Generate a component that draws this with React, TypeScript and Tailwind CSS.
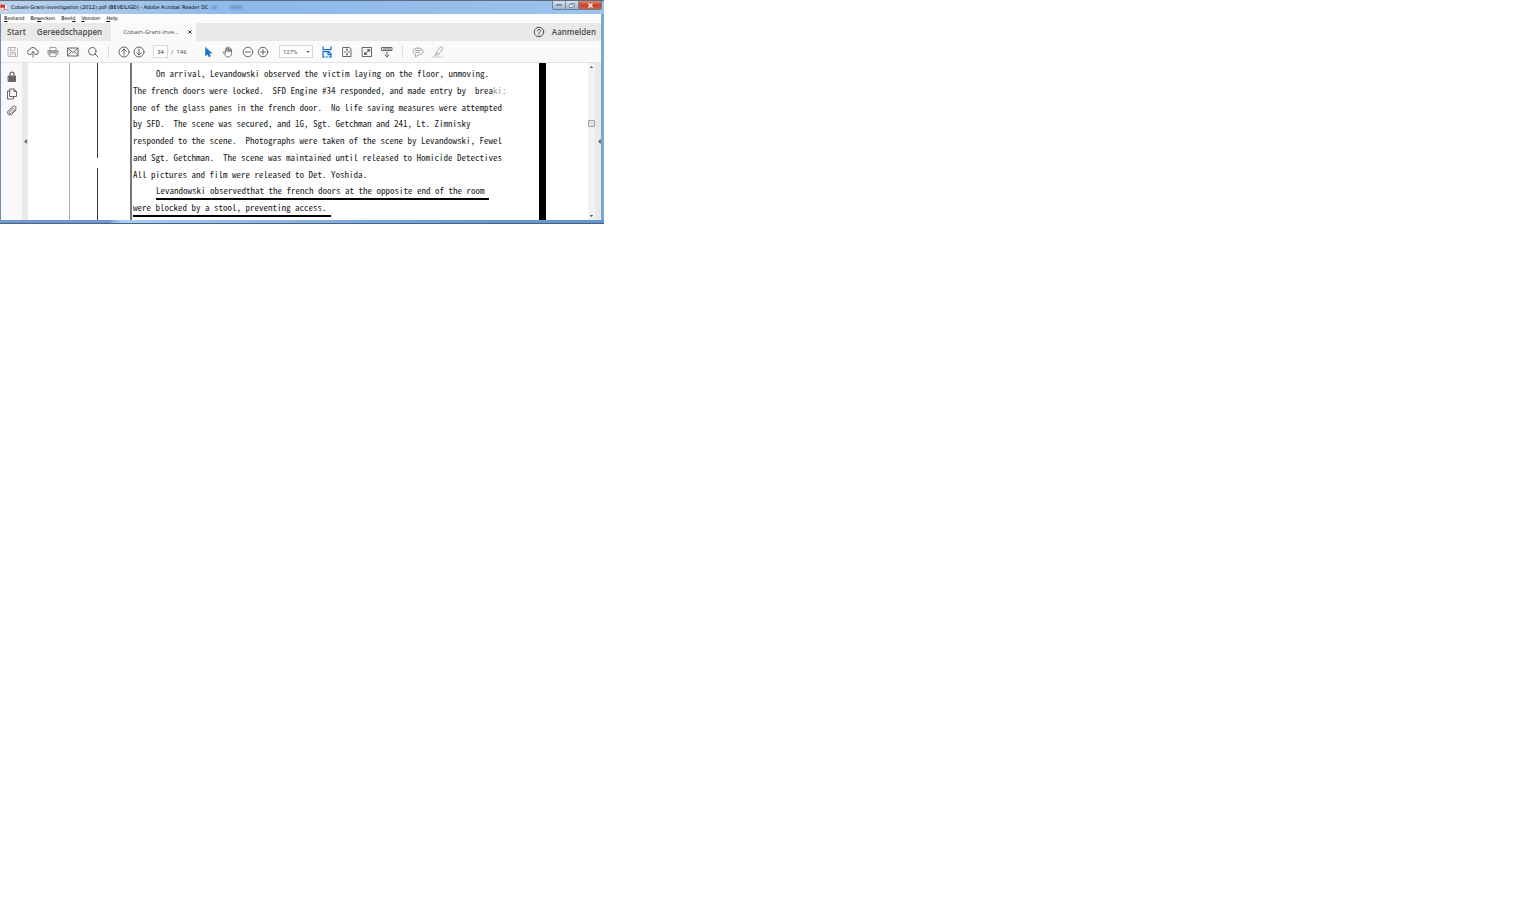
import React from "react";

type Line = { text: string; tail?: string; indent?: boolean; rule?: boolean };

const lines: Line[] = [
  { text: "On arrival, Levandowski observed the victim laying on the floor, unmoving.", indent: true },
  { text: "The french doors were locked.  SFD Engine #34 responded, and made entry by  brea", tail: "ki:" },
  { text: "one of the glass panes in the french door.  No life saving measures were attempted" },
  { text: "by SFD.  The scene was secured, and 1G, Sgt. Getchman and 241, Lt. Zimnisky" },
  { text: "responded to the scene.  Photographs were taken of the scene by Levandowski, Fewel" },
  { text: "and Sgt. Getchman.  The scene was maintained until released to Homicide Detectives" },
  { text: "All pictures and film were released to Det. Yoshida." },
  { text: "Levandowski observedthat the french doors at the opposite end of the room", indent: true, rule: true },
  { text: "were blocked by a stool, preventing access.", rule: true },
];

const menus = ["Bestand", "Bewerken", "Beeld", "Venster", "Help"];
const accel = [0, 2, 4, 0, 0];

function Tool({
  label,
  children,
  className = "",
}: {
  label: string;
  children: React.ReactNode;
  className?: string;
}) {
  return (
    <button type="button" aria-label={label} className={`flex size-3 shrink-0 items-center justify-center ${className}`}>
      <svg
        viewBox="0 0 24 24"
        className="size-3"
        fill="none"
        stroke="currentColor"
        strokeWidth="2"
        strokeLinecap="round"
        strokeLinejoin="round"
      >
        {children}
      </svg>
    </button>
  );
}

function TitleBar() {
  return (
    <header className="flex h-[14px] items-start justify-between border-t border-[#5d6b80] bg-linear-to-r from-[#bdd3ec] via-[#8db8e8] via-40% to-[#9dc3ee] pr-[2px]">
      <div className="flex h-[13px] items-center gap-[3px]">
        <svg viewBox="0 0 24 24" className="size-2" aria-hidden="true">
          <path d="M5 1h11l5 5v17H5z" fill="#fff" stroke="#b9b9b9" />
          <path d="M1 2h14v9H1z" fill="#d92a20" />
          <path d="M8 21c4-3 6-8 5-10s-2 0 0 3 5 4 7 3-4-2-12 4z" fill="none" stroke="#d92a20" strokeWidth="2" />
        </svg>
        <h1 className="font-['DejaVu_Sans',sans-serif] text-[5px] font-normal whitespace-nowrap text-black">
          Cobain-Grant-investigation (2012).pdf (BEVEILIGD) - Adobe Acrobat Reader DC
        </h1>
        <span className="h-[3px] w-[5px] bg-[#4d7fb8] opacity-60 blur-[1px]" />
        <span className="ml-[10px] h-[3px] w-[12px] bg-[#4d7fb8] opacity-60 blur-[1px]" />
      </div>
      <div className="flex h-[9px] overflow-hidden rounded-b-[2px] border border-t-0 border-[#6d7f96]">
        <button type="button" aria-label="Minimaliseren" className="flex w-[13px] items-center justify-center border-r border-[#7389a3] bg-linear-to-b from-[#d5e0ee] to-[#9fb6d0]">
          <span className="h-[2px] w-[6px] border border-[#7f8ea2] bg-white" />
        </button>
        <button type="button" aria-label="Vorig formaat" className="flex w-[13px] items-center justify-center border-r border-[#7389a3] bg-linear-to-b from-[#d5e0ee] to-[#9fb6d0]">
          <svg viewBox="0 0 12 10" className="h-[5px] w-[6px]" fill="#fff" stroke="#68788c" strokeWidth="1.5">
            <path d="M3 1h8v6H3z" />
            <path d="M1 3h7v6H1z" />
          </svg>
        </button>
        <button type="button" aria-label="Sluiten" className="flex w-[22px] items-center justify-center bg-linear-to-b from-[#dc8a7b] via-[#c84029] to-[#d5603f]">
          <svg viewBox="0 0 10 10" className="size-[5px]">
            <path d="M1 1l8 8M9 1L1 9" stroke="#fff" strokeWidth="2.5" />
          </svg>
        </button>
      </div>
    </header>
  );
}

function Toolbar() {
  return (
    <div role="toolbar" aria-label="Gereedschappen" className="flex h-[22px] shrink-0 items-center border-b border-[#e2e2e2] bg-[#fafafa] pl-[6px] text-[#686868]">
      <div className="flex gap-2">
        <Tool label="Opslaan" className="text-[#b5b5b5]">
          <path d="M3 3h15l3 3v15H3zM7 3v6h9V3M7 21v-8h10v8M10 16h4" />
        </Tool>
        <Tool label="Uploaden">
          <path d="M8 17H6a4.500 4.500 0 0 1-1-9 7 7 0 0 1 13.500 0A4.500 4.500 0 0 1 18 17h-2M12 22V11M8.500 14.500L12 11l3.500 3.500" />
        </Tool>
        <Tool label="Afdrukken" className="text-[#a2a2a2]">
          <path d="M6 8V3h12v5M6 17H2V9h20v8h-4M6 14h12v7H6z" />
          <path d="M3 9h18v4H3z" fill="currentColor" />
        </Tool>
        <Tool label="E-mail">
          <path d="M2 4h20v16H2zM2 5l10 8 10-8M2 19l7-8M22 19l-7-8" />
        </Tool>
        <Tool label="Zoeken">
          <circle cx="10.500" cy="10.500" r="7.500" />
          <path d="M16 16l6 6" />
        </Tool>
      </div>
      <span className="ml-[9px] h-[13px] w-px bg-[#dedede]" />
      <div className="ml-[9px] flex gap-[3px]">
        <Tool label="Vorige pagina">
          <circle cx="12" cy="12" r="10" />
          <path d="M12 18V6M7.500 10.500L12 6l4.500 4.500" />
        </Tool>
        <Tool label="Volgende pagina">
          <circle cx="12" cy="12" r="10" />
          <path d="M12 6v12M7.500 13.500L12 18l4.500-4.500" />
        </Tool>
      </div>
      <input
        aria-label="Pagina"
        defaultValue="34"
        className="ml-[8px] h-[13px] w-[15px] border border-[#d8d8d8] bg-white text-center font-['Roboto','Open_Sans',sans-serif] text-[6px] text-[#444]"
      />
      <span className="ml-[3px] w-[16px] font-['Roboto','Open_Sans',sans-serif] text-[6px] whitespace-nowrap text-[#555]">/&nbsp; 146</span>
      <div className="ml-[15px] flex gap-2">
        <Tool label="Selecteren" className="text-[#1473c8]">
          <path d="M7 3v17l4-4 3 6 3-1.500-3-6h5.500z" fill="currentColor" strokeWidth="1" />
        </Tool>
        <Tool label="Handje">
          <path d="M7 14V6a1.500 1.500 0 0 1 3 0v5V3.500a1.500 1.500 0 0 1 3 0V11 4.500a1.500 1.500 0 0 1 3 0V12 7a1.500 1.500 0 0 1 3 0v8c0 5-3 7-7 7-3.500 0-5-2-6.500-4.500L2.500 13c0-2 2-2 3-.5L7 14" strokeWidth="1.700" />
        </Tool>
        <Tool label="Uitzoomen">
          <circle cx="12" cy="12" r="9.500" />
          <path d="M7 12h10" />
        </Tool>
      </div>
      <Tool label="Inzoomen" className="ml-[3px]">
        <circle cx="12" cy="12" r="9.500" />
        <path d="M7 12h10M12 7v10" />
      </Tool>
      <span className="relative ml-[10px] flex">
        <select
          aria-label="Zoomniveau"
          className="h-[13px] w-[34px] appearance-none border border-[#d5d5d5] bg-white pl-[3px] font-['Roboto','Open_Sans',sans-serif] text-[6px] leading-[11px] text-[#555]"
        >
          <option>127%</option>
        </select>
        <svg viewBox="0 0 8 5" className="pointer-events-none absolute top-[6px] right-[3px] h-[2px] w-[4px]">
          <path d="M0 0h8L4 5z" fill="#555" />
        </svg>
      </span>
      <div className="ml-2 flex gap-2">
        <Tool label="Breedte passend" className="text-[#1473c8]">
          <path d="M4 1v6h16V1M4 23V11h11l5 5v7M14 11v6h6" strokeLinecap="butt" strokeWidth="2.500" />
          <path d="M4 22h16" strokeDasharray="3 3" />
        </Tool>
        <Tool label="Hele pagina">
          <path d="M4 3h13l3 3v15H4z" />
          <path d="M12 6v3M12 15v3M7 12h3M14 12h3M10.500 7.500L12 6l1.500 1.500M10.500 16.500L12 18l1.500-1.500" />
        </Tool>
        <Tool label="Volledig scherm">
          <path d="M3 3h18v18H3z" />
          <path d="M7 17L17 7M13 7h4v4zM7 13v4h4z" fill="currentColor" />
        </Tool>
        <Tool label="Werkbalk">
          <path d="M2 3h20v6H2zM6 4v4M10 4v4M14 4v4M18 4v4M12 12v10M8 18l4 4 4-4" />
        </Tool>
      </div>
      <span className="ml-[9px] h-[13px] w-px bg-[#dedede]" />
      <div className="ml-[9px] flex gap-2 text-[#a8a8a8]">
        <Tool label="Opmerking">
          <path d="M12 4c6 0 10 3 10 7s-4 7-10 7l-5 4v-5c-3-1-5-3-5-6 0-4 4-7 10-7zM7 9h10M7 13h8" />
        </Tool>
        <Tool label="Markeren">
          <path d="M18 2l4 3-9 12-6 1 2-6zM9 12l4 4M7 18l-4 3" />
          <path d="M2 22h20" opacity="0.5" />
        </Tool>
      </div>
    </div>
  );
}

function Sidebar() {
  return (
    <aside className="flex shrink-0">
      <nav aria-label="Navigatievensters" className="flex w-[21px] flex-col items-center gap-[5px] bg-[#f9f9f9] pt-[8px] text-[#666]">
        <Tool label="Beveiliging">
          <path d="M5 10h14v11H5z" fill="currentColor" />
          <path d="M8 10V6a4 4 0 0 1 8 0v4" strokeWidth="2.500" />
        </Tool>
        <Tool label="Paginaminiaturen">
          <path d="M8 2h8l5 5v10H8zM16 2v5h5M8 6H3v16h12v-5" />
        </Tool>
        <Tool label="Bijlagen">
          <path d="M20 10l-9 9a5 5 0 0 1-7-7l10-9a3.500 3.500 0 0 1 5 5l-9 9a2 2 0 0 1-3-3l8-8" />
        </Tool>
      </nav>
      <button type="button" aria-label="Navigatievenster openen" className="flex w-[6px] items-center justify-center bg-[#e9e9e9]">
        <svg viewBox="0 0 4 8" className="h-[5px] w-[3px]"><path d="M4 0v8L0 4z" fill="#555" /></svg>
      </button>
    </aside>
  );
}

function Page() {
  return (
    <article className="flex min-w-0 flex-1 bg-white">
      <div className="w-[42px] shrink-0 border-r border-[#aaa]" />
      <div className="flex w-[28px] shrink-0 flex-col items-end">
        <span className="h-[95px] w-px bg-[#333]" />
        <span className="mt-[10px] w-px flex-1 bg-[#333]" />
      </div>
      <div className="w-[34px] shrink-0 border-r-2 border-[#777]" />
      <div className="flex min-w-0 flex-1 flex-col justify-between overflow-hidden pt-[4px] pb-[5px] pl-px font-['Noto_Sans_Mono_CJK_SC','Liberation_Mono',monospace] text-[9px] leading-[14px] text-[#222]">
        {lines.map((l) => (
          <p
            key={l.text}
            className={`h-[14px] shrink-0 whitespace-pre ${l.indent ? "ml-[23px]" : ""}`}
          >
            <span className={l.rule ? "inline-block border-b-2 border-black pr-[4px]" : ""}>{l.text}</span>
            {l.tail && <span className="text-[#999]">{l.tail}</span>}
          </p>
        ))}
      </div>
      <div className="mr-[42px] w-[7px] shrink-0 bg-black" />
    </article>
  );
}

export default function App() {
  return (
    <div className="min-h-screen bg-white font-['Open_Sans','Noto_Sans',sans-serif]">
      <main className="flex w-full max-w-[604px] flex-col">
        <TitleBar />
        <div className="border-r-[3px] border-l border-r-[#7fa6d6] border-l-[#6f8cb0]">
          <nav aria-label="Menu" className="flex h-[9px] items-center gap-[6px] bg-[#fcfcfc] pl-[3px] font-['DejaVu_Sans',sans-serif] text-[5px] text-black">
            {menus.map((m, i) => (
              <button type="button" key={m} className="leading-[9px]">
                {m.slice(0, accel[i])}
                <u>{m[accel[i]]}</u>
                {m.slice(accel[i] + 1)}
              </button>
            ))}
          </nav>
          <div className="flex h-[18px] items-stretch bg-[#e9e9e9] text-[8px] font-semibold text-[#4b4b4b]">
            <button type="button" className="ml-[6px]">Start</button>
            <button type="button" className="ml-[11px]">Gereedschappen</button>
            <div className="ml-[9px] flex w-[85px] items-center justify-between bg-[#fafafa] pr-[4px] pl-[12px] text-[6px] font-normal">
              <span>Cobain-Grant-inve...</span>
              <button type="button" aria-label="Tabblad sluiten">
                <svg viewBox="0 0 10 10" className="size-[4px]">
                  <path d="M1 1l8 8M9 1L1 9" stroke="#333" strokeWidth="2.500" />
                </svg>
              </button>
            </div>
            <div className="ml-auto flex items-center gap-[7px] pr-[5px]">
              <Tool label="Help">
                <circle cx="12" cy="12" r="9.500" />
                <path d="M9 9.500a3 3 0 1 1 4 3c-1 .5-1 1-1 2M12 17.500v.5" />
              </Tool>
              <button type="button">Aanmelden</button>
            </div>
          </div>
          <Toolbar />
          <div className="flex h-[157px]">
            <Sidebar />
            <Page />
            <div className="flex w-[7px] shrink-0 flex-col items-center justify-between bg-[#f1f1f1] py-[3px]">
              <svg viewBox="0 0 6 4" className="h-[2px] w-[3px]"><path d="M0 4h6L3 0z" fill="#444" /></svg>
              <span className="mb-[36px] h-[7px] w-[7px] rounded-[1px] border border-[#a0a0a0] bg-[#e4e4e4]" />
              <svg viewBox="0 0 6 4" className="h-[2px] w-[3px]"><path d="M0 0h6L3 4z" fill="#444" /></svg>
            </div>
            <button type="button" aria-label="Deelvenster openen" className="flex w-[6px] shrink-0 items-center justify-end bg-[#e9e9e9]">
              <svg viewBox="0 0 4 8" className="h-[5px] w-[3px]"><path d="M4 0v8L0 4z" fill="#555" /></svg>
            </button>
          </div>
        </div>
        <div className="h-[4px] border-b border-[#4a6384] bg-linear-to-r from-[#6f99cc] from-18% via-[#a9cdf0] via-20% to-[#6496d0] to-82%" />
      </main>
    </div>
  );
}
